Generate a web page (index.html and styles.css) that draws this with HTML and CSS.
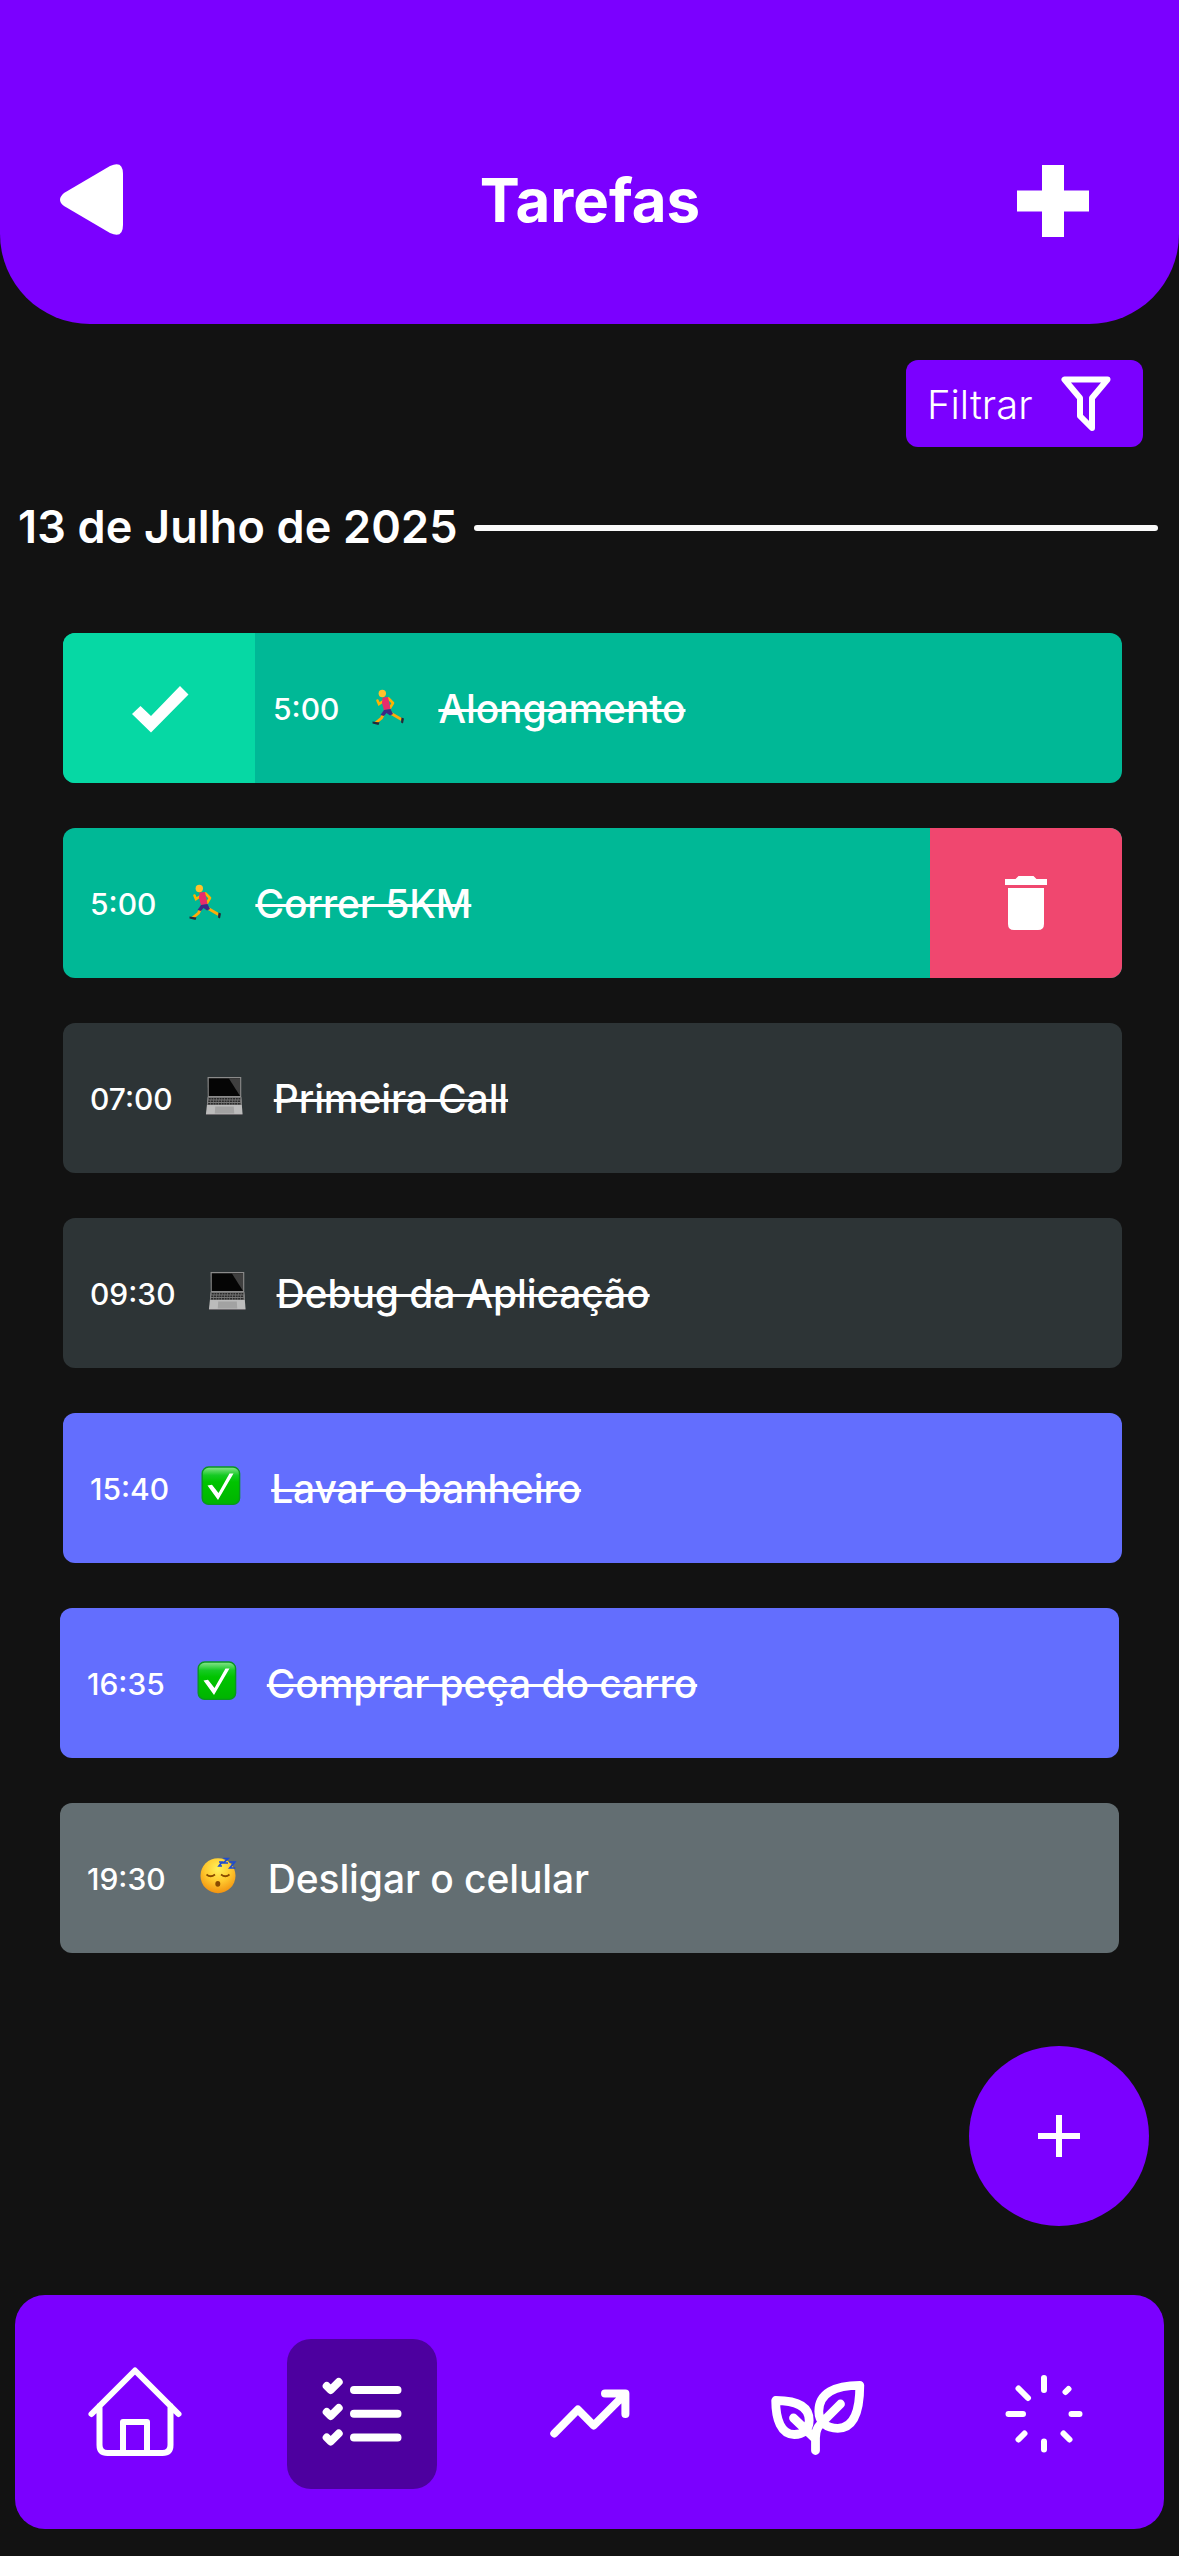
FILE: index.html
```
<!DOCTYPE html>
<html lang="pt-BR">
<head>
<meta charset="utf-8">
<title>Tarefas</title>
<link rel="stylesheet" href="styles.css">
</head>
<body>
<svg class="symbols" aria-hidden="true">
  <defs>
    <linearGradient id="check-fill" x1="0" y1="0" x2="0" y2="1"><stop offset="0" stop-color="#8be58f"/><stop offset=".22" stop-color="#16ca24"/><stop offset=".4" stop-color="#00c400"/><stop offset="1" stop-color="#00b400"/></linearGradient>
    <radialGradient id="face-fill" cx=".5" cy=".3" r=".75"><stop offset="0" stop-color="#fff25a"/><stop offset=".5" stop-color="#ffc92e"/><stop offset="1" stop-color="#f08a0c"/></radialGradient>
  </defs>
  <symbol id="runner" viewBox="7.500 6 40 40">
    <path d="M17 20.500l1.500 3.500 4.500-3" fill="none" stroke="#ffb300" stroke-width="2.600" stroke-linecap="round"/>
    <path d="M28 18.500l4.500 4.500-3 5" fill="none" stroke="#ffb300" stroke-width="2.600" stroke-linecap="round" stroke-linejoin="round"/>
    <path d="M24 32l-3 6-6 5" fill="none" stroke="#ffab0a" stroke-width="2.800"/>
    <path d="M30 33l5 3 6 3.500" fill="none" stroke="#ffab0a" stroke-width="2.800"/>
    <path d="M22 17.500l5.500-.5L30 29l-6.500 1.500L21.500 23z" fill="#e72c6b"/>
    <path d="M23.500 30l6.500-1 2.500 5-3 1.500-3.500-2.500-2.500 3-3.500-1z" fill="#3b2a86"/>
    <circle cx="21.800" cy="13.500" r="3.700" fill="#ffc22b"/>
    <path d="M12 41.500l7 1-1 2.500-6-1.500zM41 37.500l2.500 1-1 5-2-1z" fill="#26283a"/>
  </symbol>
  <symbol id="laptop" viewBox="7.250 10 40 40">
    <path d="M10.800 11h33.700v20H11z" fill="#8b8b8b"/>
    <path d="M12 12.200h31.300V30H12z" fill="#050505"/>
    <path d="M32 12.200h11.300V30z" fill="#3f3f3f"/>
    <path d="M11 31h33.500l1.300 17H9.200z" fill="#bbb"/>
    <path d="M11 31h33.500l.6 8H10.300z" fill="#777"/>
    <path d="M12 32.700h31.500M11.600 35.200h32.300M11.400 37.700h32.800" stroke="#292929" stroke-width="1.600" stroke-dasharray="2 .7"/>
    <path d="M18.500 40.500h18.500l.5 7H18z" fill="#a2a2a2"/>
    <path d="M9.200 48h36.600v1H9.200z" fill="#6d6a6e"/>
  </symbol>
  <symbol id="check-emoji" viewBox="0 0 40 40">
    <rect x="1.200" y="1" width="37.400" height="37.400" rx="6.500" fill="url(#check-fill)" stroke="#0a9620" stroke-width="1.400"/>
    <path d="M6.500 19.500l4.500-.8 6.500 8.300L28.500 7.500H32.500L17 34z" fill="#fff"/>
  </symbol>
  <symbol id="sleepy" viewBox="7.500 7 40 40">
    <circle cx="27.500" cy="26.700" r="17.500" fill="url(#face-fill)"/>
    <path d="M16 25.500q4 3.500 8.500 0M30.500 25.500q4.500 3.500 8.500 0" fill="none" stroke="#8a4b00" stroke-width="1.700"/>
    <ellipse cx="27.300" cy="34.800" rx="2.500" ry="2.900" fill="#8a4b00"/>
    <path d="M28.500 13h3l-3 4h3M33 9.500h4.500L33 14h4.500M38.800 13h5.500l-5 6h5.500" fill="none" stroke="#1f4bd0" stroke-width="1.700"/>
  </symbol>
</svg>

<div class="screen">
  <header class="header">
    <svg class="back" viewBox="0 0 63 72"><path d="M4 29L50 2Q63-4 63 10V61Q63 75 50 69L4 42Q-4 36 4 29z"/></svg>
    <h1 class="title">Tarefas</h1>
    <svg class="add" viewBox="0 0 72 72"><path d="M25 0h22v25.500h25v21H47V72H25V46.500H0v-21h25z"/></svg>
  </header>

  <button class="filter">
    <span>Filtrar</span>
    <svg class="filter-icon" viewBox="0 0 50 56"><path d="M3.500 3.500h43L31 22v30l-12-12V22z" fill="none" stroke="#fff" stroke-width="6" stroke-linejoin="round"/></svg>
  </button>

  <div class="date"><h2>13 de Julho de 2025</h2><span class="rule"></span></div>

  <main class="tasks">
    <article class="task sport">
      <div class="action done"><svg viewBox="0 0 57 47"><path d="M0 28L8.500 20l10.500 10L48 0l8.500 8.500L19 46.500z" fill="#fff"/></svg></div>
      <time>5:00</time><svg class="emoji"><use href="#runner"/></svg><span class="name struck">Alongamento</span>
    </article>
    <article class="task sport">
      <time>5:00</time><svg class="emoji"><use href="#runner"/></svg><span class="name struck">Correr 5KM</span>
      <div class="action delete"><svg viewBox="0 0 42 54"><path d="M0 3h10.500l3-3h15l3 3H42v6H0zM3 12h36v36q0 6-6 6H9q-6 0-6-6z" fill="#fff"/></svg></div>
    </article>
    <article class="task work">
      <time>07:00</time><svg class="emoji"><use href="#laptop"/></svg><span class="name struck">Primeira Call</span>
    </article>
    <article class="task work">
      <time>09:30</time><svg class="emoji"><use href="#laptop"/></svg><span class="name struck">Debug da Aplicação</span>
    </article>
    <article class="task home">
      <time>15:40</time><svg class="emoji"><use href="#check-emoji"/></svg><span class="name struck">Lavar o banheiro</span>
    </article>
    <article class="task home shifted">
      <time>16:35</time><svg class="emoji"><use href="#check-emoji"/></svg><span class="name struck">Comprar peça do carro</span>
    </article>
    <article class="task rest shifted">
      <time>19:30</time><svg class="emoji"><use href="#sleepy"/></svg><span class="name">Desligar o celular</span>
    </article>
  </main>

  <button class="fab"><svg viewBox="0 0 42 42"><path d="M21 0v42M0 21h42" stroke="#fff" stroke-width="6"/></svg></button>

  <nav class="nav">
    <a class="tab"><svg viewBox="0 0 150 150"><path d="M31.500 75L75 31.500 118.500 75M39.500 67v39q0 8 8 8h55q8 0 8-8V67M63 114V83h24v31" stroke-width="6"/></svg></a>
    <a class="tab active"><svg viewBox="0 0 150 150"><path d="M67 51h43.500M67 74.700h43.500M67 98.500h43.500M39.700 47l4 4 8-8M39.700 73l4 4 8-8M39.700 98.500l4 4 8-8" stroke-width="8"/></svg></a>
    <a class="tab"><svg viewBox="0 0 150 150"><path d="M39.300 94.500l23.600-24L78.700 86.500l31-31M90 54.500h20.400V75" stroke-width="8"/></svg></a>
    <a class="tab"><svg viewBox="0 0 150 150"><path d="M33.700 61.500c16 0 33.500 3 33.500 20 0 9-6 14-15 14-13 0-18.500-15-18.500-34zM117.800 46.300c-25 0-41 8-41 26 0 11 8 17 19 17 16 0 22-18 22-43zM73.500 111.500V99c0-9 3-12 8-17l17-17M73.500 100L51.500 79" stroke-width="8.800"/></svg></a>
    <a class="tab"><svg viewBox="0 0 150 150"><path d="M75 39v12M96.500 53l3-3M102.500 75h8M94.500 94.500l6 6M75 102.500v8M55.500 94.500l-6 6M54 75H39.500M59 59l-9.500-9.500" stroke-width="6"/></svg></a>
  </nav>
</div>
</body>
</html>
```
FILE: styles.css
```
* { box-sizing: border-box; }

body {
  margin: 0;
  background: #121212;
  color: #fff;
  font-family: Inter, "Liberation Sans", sans-serif;
}

h1, h2 { margin: 0; }

button {
  border: 0;
  padding: 0;
  color: inherit;
  font-family: inherit;
}

.symbols {
  position: absolute;
  width: 0;
  height: 0;
}

.screen {
  display: flex;
  flex-direction: column;
  width: 1179px;
  height: 2556px;
}

.header {
  display: grid;
  grid-template-columns: 72px 1fr 72px;
  align-items: center;
  height: 324px;
  padding: 78px 90px 0 60px;
  border-radius: 0 0 90px 90px;
  background: #7b00ff;
}

.back { width: 63px; height: 72px; fill: #fff; margin-bottom: 3px; }
.add { width: 72px; height: 72px; fill: #fff; }

.title {
  margin: 0 0 3px 31px;
  font-size: 60px;
  font-weight: 700;
  line-height: 72px;
  text-align: center;
}

.filter {
  display: flex;
  align-items: center;
  align-self: flex-end;
  justify-content: space-between;
  width: 237px;
  height: 87px;
  margin: 36px 36px 0 0;
  padding: 0 32px 0 21px;
  border-radius: 12px;
  background: #7b00ff;
  font-size: 40px;
  font-weight: 330;
}

.filter span { margin-top: 2px; }
.filter-icon { width: 50px; height: 56px; }

.date {
  display: flex;
  align-items: center;
  gap: 16px;
  height: 60px;
  margin-top: 51px;
  padding: 0 21px 0 18px;
}

.date h2 {
  margin-bottom: 3px;
  font-size: 45px;
  font-weight: 600;
  letter-spacing: .15px;
  white-space: nowrap;
}

.rule {
  flex: 1;
  height: 6px;
  border-radius: 3px;
  background: #fafafa;
}

.tasks {
  display: flex;
  flex-direction: column;
  gap: 45px;
  margin: 75px 57px 0 63px;
}

.task {
  display: flex;
  align-items: center;
  height: 150px;
  padding-left: 27px;
  border-radius: 12px;
  overflow: hidden;
}

.sport { background: #00b896; }
.work { background: #2d3436; }
.home { background: #636efe; }
.rest { background: #636e72; }

.shifted { margin: 0 3px 0 -3px; }

.task time { margin-top: 2px; font-size: 30px; font-weight: 470; }
.sport time { margin-right: -1px; }
.work time { margin-right: 1px; }
.home time, .rest time { margin-right: 2px; }

.emoji {
  width: 40px;
  height: 40px;
  margin: 0 30px 4px;
}

.name {
  font-size: 39px;
  font-weight: 500;
  letter-spacing: -.1px;
  white-space: nowrap;
}
.struck { text-decoration: line-through; text-decoration-thickness: 3px; }

.action {
  display: flex;
  align-items: center;
  justify-content: center;
  width: 192px;
  height: 150px;
}

.done { margin: 0 18px 0 -27px; background: #06d8a4; }
.done svg { width: 57px; height: 47px; margin: 3px 0 0 2px; }
.delete { margin-left: auto; background: #f0476f; }
.delete svg { width: 42px; height: 54px; }

.fab {
  display: flex;
  align-items: center;
  justify-content: center;
  align-self: flex-end;
  width: 180px;
  height: 180px;
  margin: 93px 30px 0 0;
  border-radius: 50%;
  background: #7b00ff;
}

.fab svg { width: 42px; height: 42px; }

.nav {
  display: flex;
  align-items: center;
  justify-content: space-between;
  height: 234px;
  margin: 69px 15px 0;
  padding: 4px 45px 0;
  border-radius: 30px;
  background: #7b00ff;
}

.tab { width: 150px; height: 150px; border-radius: 24px; }
.tab.active { background: #4d009f; }

.tab svg {
  display: block;
  width: 150px;
  height: 150px;
  fill: none;
  stroke: #fff;
  stroke-linecap: round;
  stroke-linejoin: round;
}
```
